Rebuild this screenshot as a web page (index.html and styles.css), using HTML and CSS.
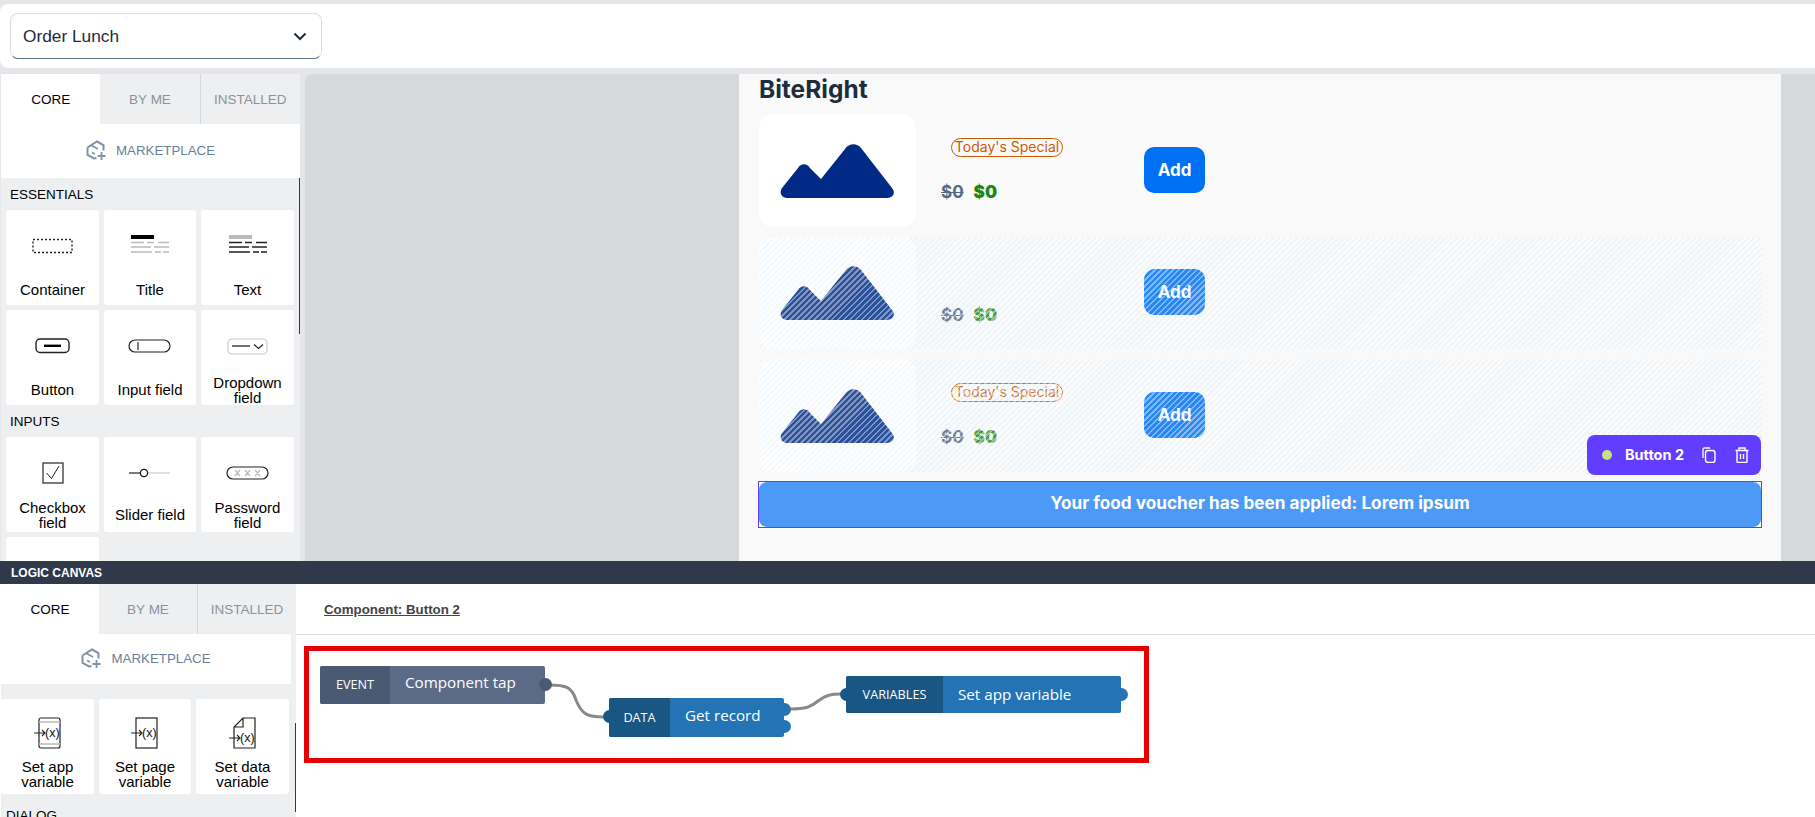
FILE: index.html
```html
<!DOCTYPE html>
<html lang="en">
<head>
    <meta charset="UTF-8">
    <meta name="viewport" content="width=device-width, initial-scale=1.0">
    <title>Order Lunch</title>
    <link rel="stylesheet" href="styles.css">
</head>
<body>
<svg class="defs" width="0" height="0">
    <symbol id="market" viewBox="0 0 20 20">
        <path d="M1.500 7.500L11 1.500 17.500 5V10.500M1.500 7.500V15L8 18.500 10.500 18" fill="none" stroke="#7f93a8" stroke-width="2"/>
        <path d="M5.500 5.500L12 9M6 12.500l3 1.500" fill="none" stroke="#7f93a8" stroke-width="1.500"/>
        <path d="M15.500 12v8M11.500 16h8" fill="none" stroke="#7f93a8" stroke-width="1.800"/>
    </symbol>
    <symbol id="mountain" viewBox="0 0 115 55">
        <path d="M8 55C1 55-1 49 2 45L18 25C21 20 27 20 30 25L41 36 65 6C69 0 77 0 81 5L112 45C116 50 113 55 107 55Z" fill="#002a86"/>
    </symbol>
</svg>
<div class="app">
    <header class="toolbar">
        <div class="page-select">
            <span>Order Lunch</span>
            <svg width="14" height="9" viewBox="0 0 14 9"><path d="M1.500 1.500L7 7l5.500-5.500" fill="none" stroke="#1d2d3e" stroke-width="2"/></svg>
        </div>
    </header>

    <section class="builder">
        <aside class="library">
            <div class="tabs">
                <div class="tab active">CORE</div>
                <div class="tab">BY ME</div>
                <div class="tab">INSTALLED</div>
            </div>
            <div class="marketplace"><svg width="20" height="20"><use href="#market"/></svg><span>MARKETPLACE</span></div>
            <div class="palette">
                <div class="thumb"></div>
                <h4>ESSENTIALS</h4>
                <div class="cards">
                    <div class="card">
                        <div class="icon"><svg width="42" height="16" viewBox="0 0 42 16"><rect x="1" y="1.500" width="39" height="13" fill="none" stroke="#222" stroke-width="1.400" stroke-dasharray="2 2"/></svg></div>
                        <div class="name">Container</div>
                    </div>
                    <div class="card">
                        <div class="icon"><svg width="40" height="22" viewBox="0 0 40 22"><rect x="1" y="0" width="23" height="4" fill="#000"/><path d="M1 7.500h13M17 7.500h7M28 7.500h11M1 12h20M24 12h15M1 17h21M25 17h6M33 17h6" stroke="#bbb" stroke-width="1.500"/></svg></div>
                        <div class="name">Title</div>
                    </div>
                    <div class="card">
                        <div class="icon"><svg width="40" height="22" viewBox="0 0 40 22"><rect x="1" y="0" width="23" height="4" fill="#bbb"/><path d="M1 7.500h13M17 7.500h7M28 7.500h11M1 12h20M24 12h15M1 17h21M25 17h6M33 17h6" stroke="#222" stroke-width="1.500"/></svg></div>
                        <div class="name">Text</div>
                    </div>
                    <div class="card">
                        <div class="icon"><svg width="36" height="16" viewBox="0 0 36 16"><rect x="1" y="1" width="33" height="13.500" rx="4" fill="none" stroke="#222" stroke-width="1.400"/><path d="M9 7.800h17" stroke="#000" stroke-width="2.400"/></svg></div>
                        <div class="name">Button</div>
                    </div>
                    <div class="card">
                        <div class="icon"><svg width="44" height="14" viewBox="0 0 44 14"><rect x="1" y="1" width="41" height="12" rx="6" fill="none" stroke="#222" stroke-width="1.200"/><path d="M10 3v8" stroke="#222" stroke-width="1.200"/></svg></div>
                        <div class="name">Input field</div>
                    </div>
                    <div class="card">
                        <div class="icon"><svg width="42" height="17" viewBox="0 0 42 17"><rect x="1" y="1" width="39" height="15" rx="4" fill="none" stroke="#ccc" stroke-width="1.200"/><path d="M5 8h18" stroke="#333" stroke-width="1.400"/><path d="M27 6.500l4.500 4 4.500-4" fill="none" stroke="#222" stroke-width="1.300"/></svg></div>
                        <div class="name">Dropdown field</div>
                    </div>
                </div>
                <h4>INPUTS</h4>
                <div class="cards inputs">
                    <div class="card">
                        <div class="icon"><svg width="22" height="22" viewBox="0 0 22 22"><rect x="1" y="1" width="20" height="20" fill="none" stroke="#444" stroke-width="1.400"/><path d="M4.500 11l5 5.500L17 4" fill="none" stroke="#222" stroke-width="1"/></svg></div>
                        <div class="name">Checkbox field</div>
                    </div>
                    <div class="card">
                        <div class="icon"><svg width="42" height="10" viewBox="0 0 42 10"><path d="M15 5h26" stroke="#ccc" stroke-width="1.200"/><path d="M0 5h11" stroke="#222" stroke-width="1.200"/><circle cx="15" cy="5" r="3.600" fill="#fff" stroke="#111" stroke-width="1.300"/></svg></div>
                        <div class="name">Slider field</div>
                    </div>
                    <div class="card">
                        <div class="icon"><svg width="44" height="14" viewBox="0 0 44 14"><rect x="1" y="1" width="41" height="12" rx="6" fill="none" stroke="#222" stroke-width="1.200"/><path d="M9 4l5 6M14 4l-5 6M19 4l5 6M24 4l-5 6M29 4l5 6M34 4l-5 6" stroke="#bbb" stroke-width="1.200"/></svg></div>
                        <div class="name">Password field</div>
                    </div>
                    <div class="card"></div>
                </div>
            </div>
        </aside>

        <main class="canvas">
            <div class="preview">
                <h2>BiteRight</h2>
                <div class="rows">
                    <div class="row">
                        <div class="thumb-box"><svg width="115" height="55"><use href="#mountain"/></svg></div>
                        <div class="info">
                            <div class="badge-slot"><span class="badge">Today's Special</span></div>
                            <div class="prices"><s>$0</s><b>$0</b></div>
                        </div>
                        <button class="add">Add</button>
                    </div>
                    <div class="row ghost">
                        <div class="thumb-box"><svg width="115" height="55"><use href="#mountain"/></svg></div>
                        <div class="info">
                            <div class="badge-slot"></div>
                            <div class="prices"><s>$0</s><b>$0</b></div>
                        </div>
                        <button class="add">Add</button>
                    </div>
                    <div class="row ghost">
                        <div class="thumb-box"><svg width="115" height="55"><use href="#mountain"/></svg></div>
                        <div class="info">
                            <div class="badge-slot"><span class="badge">Today's Special</span></div>
                            <div class="prices"><s>$0</s><b>$0</b></div>
                        </div>
                        <button class="add">Add</button>
                    </div>
                </div>
                <div class="voucher">
                    <div class="voucher-fill">Your food voucher has been applied: Lorem ipsum</div>
                    <div class="selection">
                        <i class="dot"></i>
                        <span>Button 2</span>
                        <svg width="14" height="16" viewBox="0 0 14 16"><path d="M1 11V2.500C1 1.500 1.500 1 2.500 1H8" fill="none" stroke="#fff" stroke-width="1.300"/><rect x="3.500" y="3.500" width="9.500" height="12" rx="2.500" fill="none" stroke="#fff" stroke-width="1.400"/></svg>
                        <svg width="14" height="16" viewBox="0 0 14 16"><path d="M0.500 3.500h13M4 3V1h6v2M2 4v10.500c0 .5.500 1 1 1h8c.5 0 1-.5 1-1V4M5.500 7v5M8.500 7v5" fill="none" stroke="#fff" stroke-width="1.400"/></svg>
                    </div>
                </div>
            </div>
        </main>
    </section>

    <div class="logic-bar">LOGIC CANVAS</div>

    <section class="logic">
        <aside class="library small">
            <div class="tabs">
                <div class="tab active">CORE</div>
                <div class="tab">BY ME</div>
                <div class="tab">INSTALLED</div>
            </div>
            <div class="marketplace"><svg width="20" height="20"><use href="#market"/></svg><span>MARKETPLACE</span></div>
            <div class="palette">
                <div class="thumb"></div>
                <div class="cards">
                    <div class="card">
                        <div class="icon"><svg width="28" height="32" viewBox="0 0 28 32"><rect x="5" y="1" width="21" height="30" rx="2" fill="none" stroke="#222" stroke-width="1.200"/><path d="M5 5h21M5 27h21" stroke="#bbb" stroke-width="1.500"/><path d="M0 16h11M8 13l3 3-3 3" fill="none" stroke="#222" stroke-width="1.100"/><text x="11" y="20" class="var-x">(x)</text></svg></div>
                        <div class="name">Set app variable</div>
                    </div>
                    <div class="card">
                        <div class="icon"><svg width="28" height="32" viewBox="0 0 28 32"><rect x="5" y="1" width="21" height="30" fill="none" stroke="#222" stroke-width="1.200"/><path d="M0 16h11M8 13l3 3-3 3" fill="none" stroke="#222" stroke-width="1.100"/><text x="11" y="20" class="var-x">(x)</text></svg></div>
                        <div class="name">Set page variable</div>
                    </div>
                    <div class="card">
                        <div class="icon"><svg width="28" height="32" viewBox="0 0 28 32"><path d="M14 1h12v30H5V10zM14 1v9H5" fill="none" stroke="#222" stroke-width="1.200"/><path d="M0 21h11M8 18l3 3-3 3" fill="none" stroke="#222" stroke-width="1.100"/><text x="11" y="25" class="var-x">(x)</text></svg></div>
                        <div class="name">Set data variable</div>
                    </div>
                </div>
                <h4>DIALOG</h4>
            </div>
        </aside>

        <div class="flow">
            <div class="flow-head"><span>Component: Button 2</span></div>
            <div class="flow-area">
                <div class="focus"></div>
                <svg class="wires" width="700" height="140">
                    <path d="M253 50C270 50 276 52 280 65 286 80 292 82 308 82" fill="none" stroke="#8a8a8a" stroke-width="3"/>
                    <path d="M494 74C510 74 515 72 522 66 530 60 535 59 545 59" fill="none" stroke="#8a8a8a" stroke-width="3"/>
                </svg>
                <div class="node event n1">
                    <div class="kind">EVENT</div><div class="title">Component tap</div>
                    <i class="port out"></i>
                </div>
                <div class="node n2">
                    <i class="port in"></i>
                    <div class="kind">DATA</div><div class="title">Get record</div>
                    <i class="port out up"></i><i class="port out down"></i>
                </div>
                <div class="node n3">
                    <i class="port in"></i>
                    <div class="kind">VARIABLES</div><div class="title">Set app variable</div>
                    <i class="port out"></i>
                </div>
            </div>
        </div>
    </section>
</div>
</body>
</html>
```

FILE: styles.css
```css
/* General */
* {
    box-sizing: border-box;
}

body {
    margin: 0;
    background: #e4e6e9;
    font-family: 'Liberation Sans', Arial, sans-serif;
    color: #000;
}

.defs {
    display: block;
}

.app {
    display: flex;
    flex-direction: column;
    height: 817px;
    padding-top: 4px;
    overflow: hidden;
}

/* Top toolbar */
.toolbar {
    flex: none;
    height: 64px;
    margin-bottom: 6px;
    padding: 9px 10px;
    background: #fff;
    border-radius: 8px 0 0 8px;
}

.page-select {
    display: flex;
    align-items: center;
    justify-content: space-between;
    width: 312px;
    height: 46px;
    padding: 0 14px 0 12px;
    background: #fff;
    border: 1px solid #d9dee4;
    border-bottom: 1px solid #5b738b;
    border-radius: 8px;
    font-size: 17.3px;
    color: #1d2d3e;
}

/* Builder area */
.builder {
    flex: none;
    display: flex;
    height: 487px;
    padding-left: 1px;
}

.library {
    flex: none;
    width: 299px;
    background: #eeeff1;
    overflow: hidden;
}

.tabs {
    display: flex;
    height: 50px;
}

.tab {
    flex: 1;
    display: flex;
    align-items: center;
    justify-content: center;
    background: #eeeff1;
    color: #8b929c;
    font-size: 13.5px;
}

.tab + .tab + .tab {
    border-left: 1px solid #d5d9dc;
}

.tab.active {
    background: #fff;
    color: #000;
}

.marketplace {
    display: flex;
    align-items: center;
    justify-content: center;
    gap: 10px;
    height: 54px;
    padding-bottom: 2px;
    background: #fff;
    color: #6a7f97;
    font-size: 13.3px;
}

.palette {
    position: relative;
    padding: 0 5px;
}

.palette h4 {
    margin: 0;
    padding: 9px 4px 7px;
    font-size: 13.5px;
    line-height: 16px;
    font-weight: 400;
}

.thumb {
    position: absolute;
    top: 0;
    right: 0;
    width: 1px;
    height: 156px;
    background: #2f3949;
}

.cards {
    display: grid;
    grid-template-columns: 93px 92px 93px;
    gap: 5px;
}

.card {
    display: flex;
    flex-direction: column;
    height: 95px;
    background: #fff;
    border-radius: 3px;
    text-align: center;
}

.icon {
    flex: none;
    display: flex;
    align-items: center;
    justify-content: center;
    height: 54px;
    padding-top: 18px;
}

.name {
    flex: 1;
    display: flex;
    align-items: center;
    justify-content: center;
    padding: 10px 6px 0;
    font-size: 15px;
    line-height: 15px;
}

.inputs .name {
    padding-top: 6px;
}

.var-x {
    font-family: 'Liberation Sans', Arial, sans-serif;
    font-size: 12.5px;
    fill: #111;
}

/* Canvas and preview */
.canvas {
    flex: 1;
    display: flex;
    justify-content: center;
    margin-left: 5px;
    padding-left: 434px;
    padding-right: 34px;
    background: #d5d9dc;
    border-radius: 8px 0 0 0;
}

.preview {
    flex: 1;
    padding: 0 20px;
    background: #f9f9f9;
}

.preview h2 {
    margin: 0;
    height: 40px;
    font-family: 'Inter', sans-serif;
    font-size: 24.5px;
    line-height: 31px;
    font-weight: 700;
    color: #1d2d3e;
}

.rows {
    display: flex;
    flex-direction: column;
    gap: 10px;
    margin-right: -1px;
}

.row {
    position: relative;
    display: flex;
    align-items: center;
    height: 112.67px;
}

.row.ghost::after {
    content: "";
    position: absolute;
    inset: 0;
    border-radius: 6px;
    background: repeating-linear-gradient(135deg, rgba(255, 255, 255, 0.5) 0 1.8px, rgba(200, 232, 250, 0.2) 1.8px 4.2px);
}

.thumb-box {
    flex: none;
    display: flex;
    align-items: center;
    justify-content: center;
    width: 157px;
    height: 100%;
    background: #fff;
    border-radius: 14px;
}

.info {
    flex: none;
    align-self: flex-start;
    width: 228px;
    padding: 24px 0 0 25px;
}

.badge-slot {
    height: 19px;
    padding-left: 10px;
}

.badge {
    display: inline-block;
    height: 19px;
    width: 112px;
    border: 1px solid #cc5a00;
    border-radius: 10px;
    color: #cc5a00;
    font-family: 'Inter', sans-serif;
    font-size: 14px;
    line-height: 16px;
    text-align: center;
    white-space: nowrap;
}

.prices {
    display: flex;
    gap: 10px;
    margin-top: 25px;
    font-family: 'Inter', sans-serif;
    font-size: 17px;
    line-height: 20px;
    font-weight: 700;
}

.prices s {
    color: #556b82;
}

.prices b {
    color: #188918;
}

.add {
    flex: none;
    width: 61px;
    height: 46px;
    margin-top: -1px;
    background: #0070f2;
    border: none;
    border-radius: 10px;
    color: #fff;
    font-family: 'Inter', sans-serif;
    font-size: 17px;
    font-weight: 700;
}

.voucher {
    position: relative;
    height: 47px;
    margin: 9px -1px 0 -1px;
    background: #fff;
    border: 1px solid #623cff;
}

.voucher-fill {
    height: 45px;
    background: #4c9af5;
    border-radius: 8px;
    color: #fff;
    font-family: 'Inter', sans-serif;
    font-size: 17.2px;
    font-weight: 700;
    line-height: 42px;
    text-align: center;
}

/* The tag that floats over the selected component */
.selection {
    position: absolute;
    right: 0;
    bottom: 52px;
    display: flex;
    align-items: center;
    width: 174px;
    height: 40px;
    padding-left: 15px;
    background: #623cff;
    border-radius: 8px;
    color: #fff;
    font-family: 'Inter', sans-serif;
    font-size: 14.5px;
    font-weight: 700;
    line-height: 20px;
}

.dot {
    width: 10px;
    height: 10px;
    margin-right: 13px;
    background: #bfe67e;
    border-radius: 50%;
}

.selection svg {
    margin-left: 19px;
}

.selection span + svg {
    margin-left: 18px;
}

/* Logic canvas */
.logic-bar {
    flex: none;
    height: 23px;
    padding-left: 11px;
    background: #2f3949;
    color: #fff;
    font-size: 12px;
    font-weight: 700;
    line-height: 24px;
}

.logic {
    flex: 1;
    display: flex;
    padding-left: 1px;
    background: #fff;
}

.library.small {
    width: 295px;
}

.small .marketplace {
    width: 290px;
    height: 50px;
}

.small .palette {
    padding: 15px 0 0;
}

.small .thumb {
    top: 39px;
    right: 0;
    height: 89px;
}

.small .icon {
    height: 52px;
    padding-top: 16px;
}

.small .name {
    padding-top: 3px;
    line-height: 15px;
}

.small .palette h4 {
    padding: 14px 5px 0;
}

.flow {
    flex: 1;
    display: flex;
    flex-direction: column;
}

.flow-head {
    flex: none;
    height: 51px;
    padding: 18px 0 0 28px;
    border-bottom: 1px solid #d9dce0;
    color: #444;
    font-size: 13.3px;
    font-weight: 700;
    text-decoration: underline;
}

.flow-area {
    position: relative;
    flex: 1;
}

.focus {
    position: absolute;
    left: 8px;
    top: 11px;
    width: 845px;
    height: 117px;
    border: 5px solid #e60000;
}

.wires {
    position: absolute;
    left: 0;
    top: 0;
}

.node {
    position: absolute;
    display: flex;
    height: 38px;
    background: #2474b5;
    border-radius: 2px;
    color: #fff;
    font-family: 'Open Sans', sans-serif;
}

.node .kind {
    flex: none;
    display: flex;
    align-items: center;
    justify-content: center;
    padding-bottom: 2px;
    background: #1a5683;
    border-radius: 2px 0 0 2px;
    font-size: 12.7px;
}

.node .title {
    padding: 0 0 0 15px;
    font-size: 15.2px;
    line-height: 33px;
}

.node.event {
    background: #5b6b87;
}

.event .kind {
    background: #4a5a73;
}

.n1 {
    left: 24px;
    top: 31px;
    width: 225px;
}

.n1 .kind {
    width: 70px;
}

.n2 {
    left: 313px;
    top: 63px;
    width: 175px;
    height: 39px;
}

.n2 .kind {
    width: 61px;
}

.n2 .title {
    line-height: 35px;
}

.n3 {
    left: 550px;
    top: 41px;
    width: 275px;
    height: 37px;
}

.n3 .kind {
    width: 97px;
}

.n3 .title {
    line-height: 36px;
}

.port {
    position: absolute;
    top: 12px;
    width: 13px;
    height: 13px;
    border-radius: 50%;
    background: inherit;
}

.port.in {
    left: -6px;
    background: #1a5683;
}

.port.out {
    right: -7px;
}

.port.up {
    top: 5px;
}

.port.down {
    top: 22px;
}

.event .port {
    background: #4a5a73;
}
```
